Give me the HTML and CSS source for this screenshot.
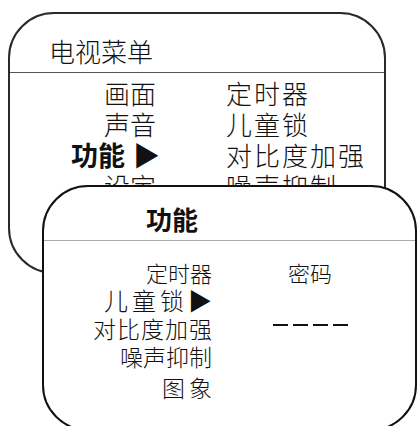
FILE: index.html
```html
<!DOCTYPE html>
<html lang="zh-CN">
	<head>
		<meta charset="utf-8" />
		<title>电视菜单</title>
		<link rel="stylesheet" href="styles.css">
	</head>
	<body>
		<div class="screen">
			<section class="menu menuMain">
				<div class="menuTitle">电视菜单</div>
				<div class="mainGrid">
					<div class="item">画面</div><div class="sub">定时器</div>
					<div class="item">声音</div><div class="sub">儿童锁</div>
					<div class="item current">功能<span class="arrow">▶</span></div><div class="sub">对比度加强</div>
					<div class="item">设定</div><div class="sub">噪声抑制</div>
					<div class="item"></div><div class="sub">图象</div>
				</div>
			</section>
			<section class="menu menuSub">
				<div class="menuTitle">功能</div>
				<div class="subGrid">
					<div class="item rowTimer">定时器</div><div class="code">密码</div>
					<div class="item rowLock">儿童锁<span class="arrow">▶</span></div><div></div>
					<div class="item rowContrast">对比度加强</div>
					<div class="dashes" aria-label="----"><span></span><span></span><span></span><span></span></div>
					<div class="item rowNoise">噪声抑制</div><div></div>
					<div class="item rowPicture">图象</div><div></div>
				</div>
			</section>
		</div>
	</body>
</html>
```

FILE: styles.css
```css
html, body {
	margin: 0;
	height: 100%;
	overflow: hidden;
	background-color: #FFFFFF;
}
body {
	font-family: "Noto Sans CJK SC", "Noto Sans", sans-serif;
	font-weight: 300;
	color: #111111;
}
.screen {
	position: relative;
	box-sizing: border-box;
	height: 426px;
	padding: 12px 0 0 8px;
}
.menu {
	box-sizing: border-box;
	border: 2px solid #2A2A2A;
	border-radius: 46px;
	background-color: #FFFFFF;
	overflow: hidden;
}
.menuTitle {
	box-sizing: border-box;
	font-size: 26px;
	line-height: 31px;
}
.item {
	text-align: right;
}

/* back menu */
.menuMain {
	width: 378px;
	height: 262px;
}
.menuMain .menuTitle {
	height: 59px;
	padding: 21px 0 0 39px;
	border-bottom: 1px solid #555555;
}
.mainGrid {
	display: grid;
	grid-template-columns: 146px auto;
	column-gap: 70px;
	padding-top: 4px;
	font-size: 26px;
	line-height: 31px;
}
.mainGrid .sub {
	letter-spacing: 2px;
}
.current {
	font-weight: bold;
	font-size: 27px;
}
.current .arrow {
	font-weight: normal;
	margin-left: 8px;
	margin-right: -4px;
}

/* front menu */
.menuSub {
	position: absolute;
	left: 42px;
	top: 185px;
	width: 375px;
	height: 246px;
	border-color: #111111;
}
.menuSub .menuTitle {
	height: 54px;
	padding: 16px 0 0 102px;
	font-weight: bold;
	border-bottom: 1px solid #AAAAAA;
}
.subGrid {
	display: grid;
	grid-template-columns: 168px 140px;
	column-gap: 28px;
	padding-top: 17px;
	line-height: 28px;
}
.rowTimer {
	font-size: 22px;
}
.rowLock {
	font-size: 24px;
	letter-spacing: 4px;
}
.rowLock .arrow {
	letter-spacing: 0;
}
.rowContrast {
	font-size: 23px;
	letter-spacing: 1px;
	margin-right: -1px;
}
.rowNoise {
	font-size: 23px;
}
.rowPicture {
	font-size: 23px;
	letter-spacing: 4px;
	margin-right: -4px;
	padding-top: 3px;
}
.code {
	font-size: 22px;
	text-align: center;
}
.dashes {
	display: flex;
	justify-content: center;
	align-items: flex-start;
	gap: 5px;
	padding-top: 10px;
}
.dashes span {
	width: 15px;
	height: 2px;
	background-color: #111111;
}
```
